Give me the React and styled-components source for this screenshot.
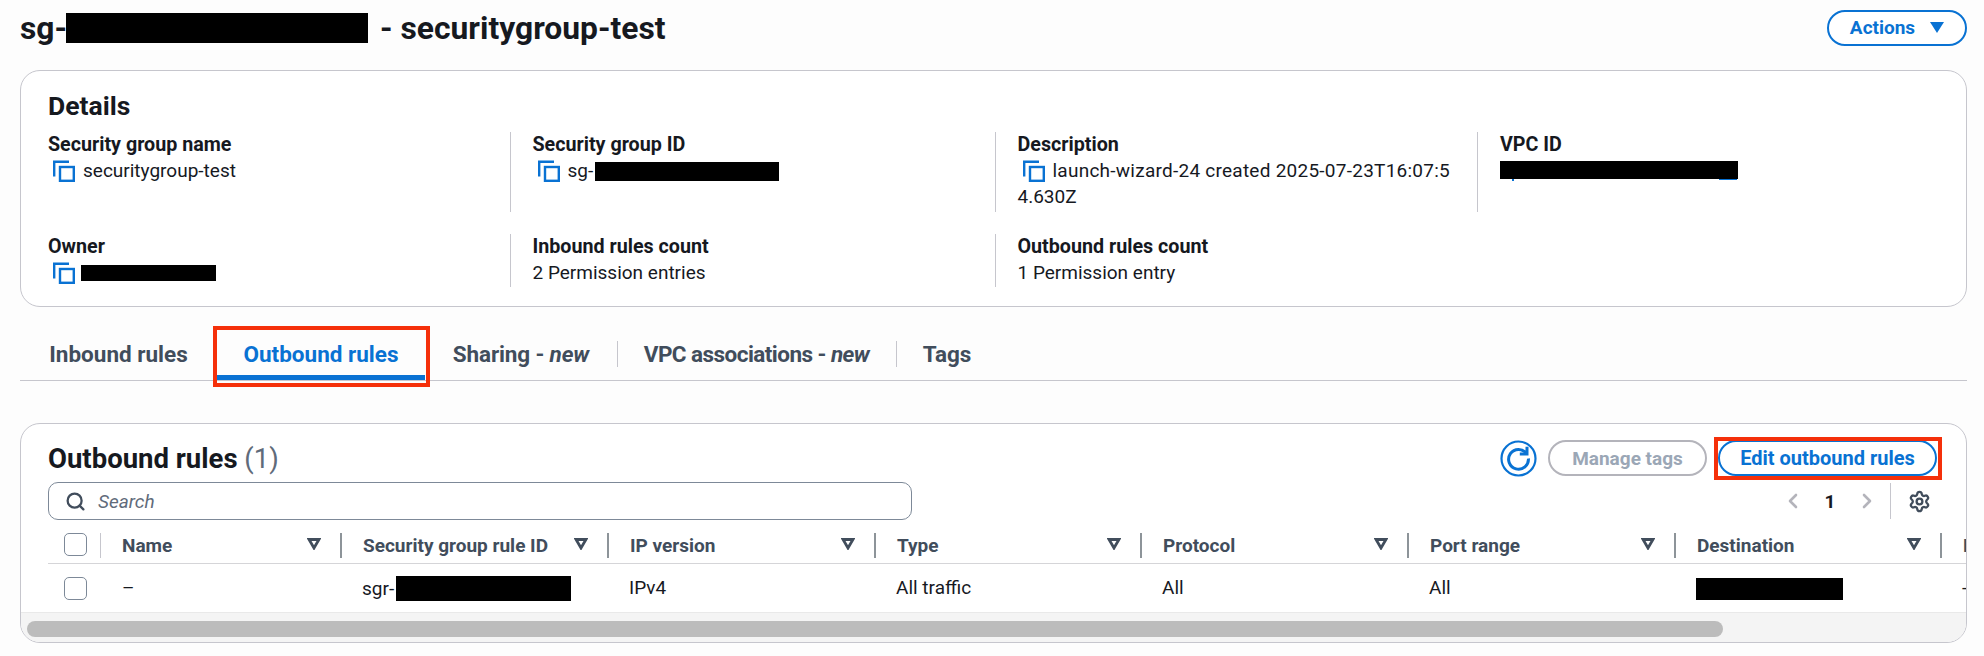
import React from "react";
import styled, { createGlobalStyle } from "styled-components";
import { ChevronLeft, ChevronRight, Search, Settings } from "lucide-react";

const blue = "#0972d3";
const ink = "#16191f";
const muted = "#414d5c";
const rule = "#c6c6cd";
const red = "#f5300a";

const GlobalStyle = createGlobalStyle`
  html, body {
    margin: 0;
    background: #fdfdfd;
    color: ${ink};
    font-family: Roboto, "Liberation Sans", sans-serif;
    font-size: 19px;
  }
  * { box-sizing: border-box; }
`;

const Page = styled.div`
  padding: 10px 17px 0 20px;
  width: 1984px;
  height: 656px;
  overflow: hidden;
`;

const TitleRow = styled.div`
  display: flex;
  justify-content: space-between;
  align-items: center;
  height: 35px;
  margin-bottom: 25px;
`;

const Title = styled.h1`
  margin: 0;
  font-size: 31.8px;
  font-weight: 700;
  display: flex;
  align-items: center;
`;

const Redacted = styled.span`
  display: inline-block;
  flex: none;
  background: #000;
  width: ${(p) => p.$w}px;
  height: ${(p) => p.$h}px;
  margin-left: ${(p) => p.$ml || 0}px;
  margin-right: ${(p) => p.$mr || 0}px;
`;

// the copy icon under this redaction still shows below its lower edge
const VpcRedacted = styled(Redacted)`
  position: relative;
  margin-top: -3px;

  &::before,
  &::after {
    content: "";
    position: absolute;
    top: 100%;
    background: ${blue};
  }

  &::before {
    left: 12px;
    width: 2px;
    height: 2px;
  }

  &::after {
    right: 1px;
    width: 18px;
    height: 1.5px;
  }
`;

const PillButton = styled.button`
  position: relative;
  display: inline-flex;
  align-items: center;
  justify-content: center;
  gap: 15px;
  height: 36px;
  width: ${(p) => p.$w}px;
  padding: 0;
  border-radius: 18px;
  background: #fff;
  border: 2px solid ${(p) => (p.$disabled ? "#b4b4bb" : blue)};
  color: ${(p) => (p.$disabled ? "#9ba7b6" : blue)};
  font: 700 ${(p) => p.$size || 19}px Roboto, sans-serif;

  ${(p) =>
    p.$marked &&
    `&::after {
      content: "";
      position: absolute;
      top: -5px;
      bottom: -6px;
      left: -6px;
      right: -7px;
      border: 4px solid ${red};
    }`}
`;

const Card = styled.section`
  background: #fff;
  border: 1.5px solid ${rule};
  border-radius: 20px;
  overflow: hidden;
`;

const DetailsCard = styled(Card)`
  height: 237px;
  padding: 17px 0 0 27px;
`;

const DetailsTitle = styled.h2`
  margin: 0 0 8px;
  font-size: 26.5px;
  line-height: 36px;
  font-weight: 700;
`;

const DetailsGrid = styled.div`
  display: grid;
  grid-template-columns: 461.5px 485px 482.5px 1fr;
  grid-template-rows: 80px 53px;
  row-gap: 22px;
`;

const Field = styled.div`
  padding-left: ${(p) => (p.$first ? 0 : 22)}px;
  border-left: ${(p) => (p.$first ? "none" : `1px solid ${rule}`)};
  line-height: 26px;
`;

const Label = styled.div`
  font-weight: 700;
  font-size: 19.7px;
`;

const Value = styled.div`
  display: flex;
  align-items: center;
  height: 26px;
  white-space: nowrap;
  padding-left: ${(p) => (p.$plain ? 0 : 5)}px;
  letter-spacing: ${(p) => p.$spacing || 0}px;
`;

const CopyGlyph = styled.svg`
  flex: none;
  width: 22px;
  height: 22px;
  margin-right: 8px;
  fill: none;
  stroke: ${blue};
  stroke-width: 2.4;
`;

const CopyIcon = () => (
  <CopyGlyph viewBox="0 0 22 22">
    <path d="M1.2 16.5V1.8H16" />
    <rect x="7" y="7" width="13.8" height="13.8" />
  </CopyGlyph>
);

const TabBar = styled.div`
  display: flex;
  height: 40px;
  margin-top: 34px;
  border-bottom: 1px solid ${rule};
`;

const Tab = styled.div`
  position: relative;
  flex: 0 0 ${(p) => p.$w}px;
  height: 39px;
  padding-top: 1px;
  text-align: center;
  line-height: 24px;
  font-size: 22.5px;
  font-weight: 700;
  letter-spacing: ${(p) => p.$spacing || 0}px;
  color: ${(p) => (p.$active ? blue : muted)};

  em { font-weight: 700; }

  ${(p) =>
    p.$divider &&
    `&::before {
      content: "";
      position: absolute;
      left: 0;
      top: 0;
      height: 26px;
      border-left: 1px solid ${rule};
    }`}

  ${(p) =>
    p.$active &&
    `&::before {
      content: "";
      position: absolute;
      left: 0;
      right: 0;
      bottom: 0;
      height: 5px;
      background: ${blue};
    }
    &::after {
      content: "";
      position: absolute;
      top: -15px;
      bottom: -7px;
      left: -4px;
      right: -5px;
      border: 4px solid ${red};
    }`}
`;

const RulesCard = styled(Card)`
  height: 220px;
  margin-top: 42px;
  display: flex;
  flex-direction: column;
`;

const Toolbar = styled.div`
  display: flex;
  align-items: center;
  height: 36px;
  margin-top: 16px;
  padding: 0 29px 0 27px;
`;

const RulesTitle = styled.h2`
  flex: 1;
  margin: 0;
  font-size: 27.5px;
  font-weight: 700;

  span {
    font-weight: 400;
    color: #5f6b7a;
  }
`;

const Actions = styled.div`
  display: flex;
  align-items: center;
  gap: 11px;
`;

const RoundIcon = styled.svg`
  flex: none;
  width: 37px;
  height: 37px;
  fill: none;
  stroke: ${blue};
  stroke-width: 2.2;
`;

const RefreshIcon = () => (
  <RoundIcon viewBox="0 0 37 37">
    <circle cx="18.5" cy="18.5" r="17" />
    <g strokeWidth="3">
      <path d="M26.6 13.6A9.9 9.9 0 1 0 28.4 18.5" />
      <path d="M27 6.8V14H19.8" />
    </g>
  </RoundIcon>
);

const FilterRow = styled.div`
  display: flex;
  justify-content: space-between;
  align-items: center;
  height: 38px;
  margin-top: 6px;
  margin-bottom: 13px;
  padding: 0 35px 0 27px;
`;

const SearchBox = styled.div`
  display: flex;
  align-items: center;
  gap: 12px;
  width: 864px;
  height: 38px;
  padding-left: 16px;
  background: #fff;
  border: 1.5px solid #7d8998;
  border-radius: 10px;
  color: #5f6b7a;
  font-style: italic;
`;

const Pager = styled.div`
  display: flex;
  align-items: center;
  height: 38px;
`;

const PagerItem = styled.div`
  display: flex;
  justify-content: center;
  width: 24px;
  margin-right: 13px;
  font-weight: 700;
  color: ${(p) => (p.$off ? "#b4b4bb" : ink)};
`;

const PagerRule = styled.div`
  height: 36px;
  margin: 0 17px 0 -2px;
  border-left: 1px solid ${rule};
`;

const TableClip = styled.div`
  flex: 1;
  overflow: hidden;
  padding-left: 27px;
`;

const HeadRow = styled.div`
  display: flex;
  width: 2000px;
  height: 31px;
  border-bottom: 1.5px solid #d5d5d8;
`;

const BodyRow = styled.div`
  display: flex;
  align-items: center;
  width: 2000px;
  height: 49px;
`;

const Tick = styled.div`
  flex: 0 0 52px;
  padding-left: 16px;
  height: ${(p) => (p.$head ? "24px" : "auto")};

  &::before {
    content: "";
    display: block;
    width: 21px;
    height: 21px;
    border: 1.5px solid #7d8998;
    border-radius: 5px;
  }
`;

const HeadCell = styled.div`
  position: relative;
  flex: 0 0 ${(p) => p.$w}px;
  height: 25px;
  padding-left: 21px;
  border-left: ${(p) => (p.$light ? `1px solid ${rule}` : "2px solid #8d9499")};
  font-weight: 700;
  color: ${muted};
  line-height: 25px;
  white-space: nowrap;
`;

const SortGlyph = styled.svg`
  position: absolute;
  right: 19px;
  top: 5px;
  width: 14px;
  height: 12px;
  fill: none;
  stroke: ${muted};
  stroke-width: 2.8;
`;

const Cell = styled.div`
  display: flex;
  align-items: center;
  flex: 0 0 ${(p) => p.$w}px;
  padding-left: 22px;
  margin-top: ${(p) => (p.$lift ? -3 : 0)}px;
  white-space: nowrap;
`;

const ScrollTrack = styled.div`
  height: 30px;
  padding: 8px 0 0 6px;
  background: #f4f4f4;
  border-top: 1.5px solid #e9e9e9;
`;

const ScrollThumb = styled.div`
  width: 1696px;
  height: 16px;
  border-radius: 8px;
  background: #bcbcbc;
`;

const columns = [
  { name: "Name", w: 240, light: true },
  { name: "Security group rule ID", w: 267 },
  { name: "IP version", w: 267 },
  { name: "Type", w: 266 },
  { name: "Protocol", w: 267 },
  { name: "Port range", w: 267 },
  { name: "Destination", w: 266 },
  { name: "Description", w: 267 },
];

const tabs = [
  { w: 197, label: "Inbound rules" },
  { w: 208, label: "Outbound rules", active: true },
  { w: 192, label: "Sharing - ", extra: "new", spacing: -0.15 },
  { w: 279, label: "VPC associations - ", extra: "new", divider: true, spacing: -0.55 },
  { w: 102, label: "Tags", divider: true },
];

const App = () => {
  return (
    <Page>
      <GlobalStyle />
      <TitleRow>
        <Title>
          sg-
          <Redacted $w={302} $h={30} $ml={-1} $mr={12} />- securitygroup-test
        </Title>
        <PillButton $w={140}>
          Actions
          <svg width="14" height="11" viewBox="0 0 14 11">
            <path d="M0 0h14L7 11z" fill={blue} />
          </svg>
        </PillButton>
      </TitleRow>

      <DetailsCard>
        <DetailsTitle>Details</DetailsTitle>
        <DetailsGrid>
          <Field $first>
            <Label>Security group name</Label>
            <Value>
              <CopyIcon />
              securitygroup-test
            </Value>
          </Field>
          <Field>
            <Label>Security group ID</Label>
            <Value>
              <CopyIcon />
              sg-
              <Redacted $w={184} $h={19} $ml={2} />
            </Value>
          </Field>
          <Field>
            <Label>Description</Label>
            <Value $spacing={0.25}>
              <CopyIcon />
              launch-wizard-24 created 2025-07-23T16:07:5
            </Value>
            <Value $plain>4.630Z</Value>
          </Field>
          <Field>
            <Label>VPC ID</Label>
            <Value $plain>
              <VpcRedacted $w={238} $h={18} />
            </Value>
          </Field>
          <Field $first>
            <Label>Owner</Label>
            <Value>
              <CopyIcon />
              <Redacted $w={135} $h={16} $ml={-2} />
            </Value>
          </Field>
          <Field>
            <Label>Inbound rules count</Label>
            <Value $plain>2 Permission entries</Value>
          </Field>
          <Field>
            <Label>Outbound rules count</Label>
            <Value $plain>1 Permission entry</Value>
          </Field>
        </DetailsGrid>
      </DetailsCard>

      <TabBar>
        {tabs.map((tab) => (
          <Tab
            key={tab.label}
            $w={tab.w}
            $active={tab.active}
            $divider={tab.divider}
            $spacing={tab.spacing}
          >
            {tab.label}
            {tab.extra && <em>{tab.extra}</em>}
          </Tab>
        ))}
      </TabBar>

      <RulesCard>
        <Toolbar>
          <RulesTitle>
            Outbound rules <span>(1)</span>
          </RulesTitle>
          <Actions>
            <RefreshIcon />
            <PillButton $w={159} $disabled>
              Manage tags
            </PillButton>
            <PillButton $w={219} $size={20} $marked>
              Edit outbound rules
            </PillButton>
          </Actions>
        </Toolbar>

        <FilterRow>
          <SearchBox>
            <Search size={21} strokeWidth={2.6} color={muted} />
            Search
          </SearchBox>
          <Pager>
            <PagerItem $off>
              <ChevronLeft size={26} strokeWidth={2.6} />
            </PagerItem>
            <PagerItem>1</PagerItem>
            <PagerItem $off>
              <ChevronRight size={26} strokeWidth={2.6} />
            </PagerItem>
            <PagerRule />
            <Settings size={23} strokeWidth={2.4} color={muted} />
          </Pager>
        </FilterRow>

        <TableClip>
          <HeadRow>
            <Tick $head />
            {columns.map((col) => (
              <HeadCell key={col.name} $w={col.w} $light={col.light}>
                {col.name}
                <SortGlyph viewBox="0 0 14 12">
                  <path d="M2 1.5h10L7 10z" />
                </SortGlyph>
              </HeadCell>
            ))}
          </HeadRow>
          <BodyRow>
            <Tick />
            <Cell $w={240} $lift>–</Cell>
            <Cell $w={267}>
              sgr-
              <Redacted $w={175} $h={25} $ml={2} />
            </Cell>
            <Cell $w={267} $lift>IPv4</Cell>
            <Cell $w={266} $lift>All traffic</Cell>
            <Cell $w={267} $lift>All</Cell>
            <Cell $w={267} $lift>All</Cell>
            <Cell $w={266}>
              <Redacted $w={147} $h={22} />
            </Cell>
            <Cell $w={267} $lift>-</Cell>
          </BodyRow>
        </TableClip>
        <ScrollTrack>
          <ScrollThumb />
        </ScrollTrack>
      </RulesCard>
    </Page>
  );
};

export default App;
